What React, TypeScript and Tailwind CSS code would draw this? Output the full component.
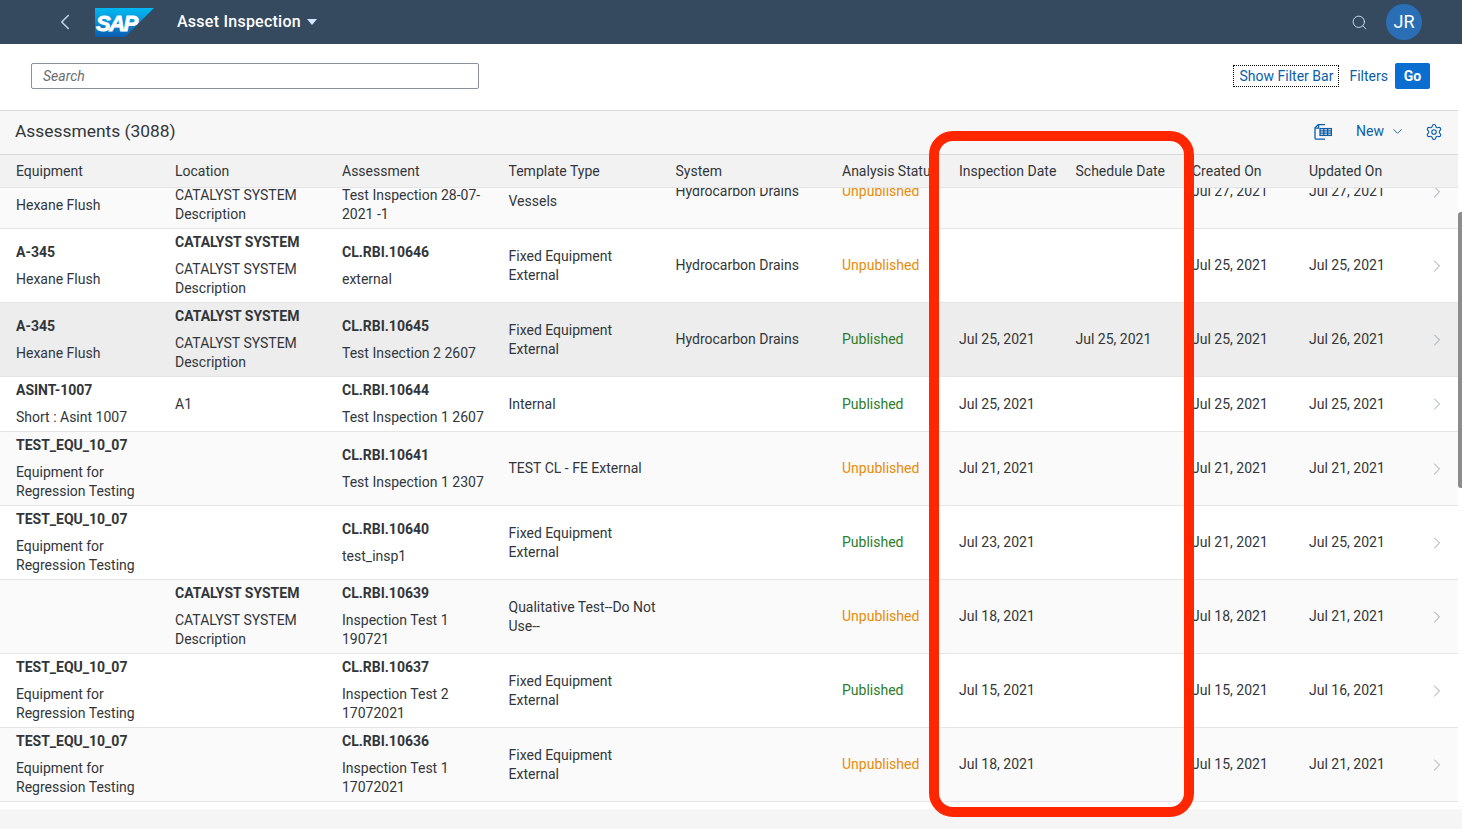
import { ChevronRight, ChevronDown, ChevronLeft, Search, Settings } from 'lucide-react';

type Row = {
  eq?: string;
  eqDesc?: string;
  locBold?: string;
  loc?: string;
  id?: string;
  name?: string;
  template?: string;
  system?: string;
  status: 'Published' | 'Unpublished';
  inspection?: string;
  schedule?: string;
  created: string;
  updated: string;
  bg: string;
};

const CAT = 'CATALYST SYSTEM';
const CAT_DESC = 'CATALYST SYSTEM Description';
const FE = 'Fixed Equipment External';
const REG = 'Equipment for Regression Testing';

const rows: Row[] = [
  { eq: 'A-345', eqDesc: 'Hexane Flush', locBold: CAT, loc: CAT_DESC, id: 'CL.RBI.10647', name: 'Test Inspection 28-07-2021 -1', template: 'Unfired Heated Tank Vessels', system: 'Hydrocarbon Drains', status: 'Unpublished', created: 'Jul 27, 2021', updated: 'Jul 27, 2021', bg: 'bg-[#fafafa]' },
  { eq: 'A-345', eqDesc: 'Hexane Flush', locBold: CAT, loc: CAT_DESC, id: 'CL.RBI.10646', name: 'external', template: FE, system: 'Hydrocarbon Drains', status: 'Unpublished', created: 'Jul 25, 2021', updated: 'Jul 25, 2021', bg: 'bg-white' },
  { eq: 'A-345', eqDesc: 'Hexane Flush', locBold: CAT, loc: CAT_DESC, id: 'CL.RBI.10645', name: 'Test Insection 2 2607', template: FE, system: 'Hydrocarbon Drains', status: 'Published', inspection: 'Jul 25, 2021', schedule: 'Jul 25, 2021', created: 'Jul 25, 2021', updated: 'Jul 26, 2021', bg: 'bg-[#ededed]' },
  { eq: 'ASINT-1007', eqDesc: 'Short : Asint 1007', loc: 'A1', id: 'CL.RBI.10644', name: 'Test Inspection 1 2607', template: 'Internal', status: 'Published', inspection: 'Jul 25, 2021', created: 'Jul 25, 2021', updated: 'Jul 25, 2021', bg: 'bg-white' },
  { eq: 'TEST_EQU_10_07', eqDesc: REG, id: 'CL.RBI.10641', name: 'Test Inspection 1 2307', template: 'TEST CL - FE External', status: 'Unpublished', inspection: 'Jul 21, 2021', created: 'Jul 21, 2021', updated: 'Jul 21, 2021', bg: 'bg-[#fafafa]' },
  { eq: 'TEST_EQU_10_07', eqDesc: REG, id: 'CL.RBI.10640', name: 'test_insp1', template: FE, status: 'Published', inspection: 'Jul 23, 2021', created: 'Jul 21, 2021', updated: 'Jul 25, 2021', bg: 'bg-white' },
  { locBold: CAT, loc: CAT_DESC, id: 'CL.RBI.10639', name: 'Inspection Test 1 190721', template: 'Qualitative Test--Do Not Use--', status: 'Unpublished', inspection: 'Jul 18, 2021', created: 'Jul 18, 2021', updated: 'Jul 21, 2021', bg: 'bg-[#fafafa]' },
  { eq: 'TEST_EQU_10_07', eqDesc: REG, id: 'CL.RBI.10637', name: 'Inspection Test 2 17072021', template: FE, status: 'Published', inspection: 'Jul 15, 2021', created: 'Jul 15, 2021', updated: 'Jul 16, 2021', bg: 'bg-white' },
  { eq: 'TEST_EQU_10_07', eqDesc: REG, id: 'CL.RBI.10636', name: 'Inspection Test 1 17072021', template: FE, status: 'Unpublished', inspection: 'Jul 18, 2021', created: 'Jul 15, 2021', updated: 'Jul 21, 2021', bg: 'bg-[#fafafa]' },
];

const grid = 'grid grid-cols-[167px_167px_166.5px_167px_166.5px_117px_116.5px_116.5px_117px_116.5px_1fr]';

function Stacked({ bold, text }: { bold?: string; text?: string }) {
  return (
    <div className="flex flex-col gap-2">
      {bold && <div className="font-bold">{bold}</div>}
      {text && <div>{text}</div>}
    </div>
  );
}

function TableRow({ row, first }: { row: Row; first?: boolean }) {
  return (
    <div className={`${grid} items-center border-b border-[#e5e5e5] py-1 leading-[19px] ${row.bg} ${first ? '-mt-[33px]' : ''}`}>
      <div className="pl-4 pr-2">
        <Stacked bold={row.eq} text={row.eqDesc} />
      </div>
      <div className="pl-2 pr-2">
        <Stacked bold={row.locBold} text={row.loc} />
      </div>
      <div className="pl-2 pr-2">
        <Stacked bold={row.id} text={row.name} />
      </div>
      <div className="pl-2 pr-2">{row.template}</div>
      <div className="pl-2 pr-2">{row.system}</div>
      <div className={`pl-2 pr-2 ${row.status === 'Published' ? 'text-[#2b7d2b]' : 'text-[#e78c07]'}`}>{row.status}</div>
      <div className="pl-2">{row.inspection}</div>
      <div className="pl-2">{row.schedule}</div>
      <div className="pl-2">{row.created}</div>
      <div className="pl-2">{row.updated}</div>
      <div className="flex justify-end pr-[11px]">
        <ChevronRight size={20} strokeWidth={1} className="text-[#89919a]" />
      </div>
    </div>
  );
}

function SapLogo() {
  return (
    <svg width="60" height="29" viewBox="0 0 60 29">
      <defs>
        <linearGradient id="sapBlue" x1="0" y1="0" x2="0" y2="1">
          <stop offset="0" stopColor="#00b8f1" />
          <stop offset="0.5" stopColor="#0a8fd8" />
          <stop offset="1" stopColor="#0a5cb0" />
        </linearGradient>
      </defs>
      <polygon points="0,0 59,0 30,29 0,29" fill="url(#sapBlue)" />
      <text x="1" y="23" fill="#fff" stroke="#fff" strokeWidth="0.8" fontFamily="'Liberation Sans', sans-serif" fontWeight="700" fontStyle="italic" fontSize="22" letterSpacing="-1.5">
        SAP
      </text>
    </svg>
  );
}

function ExportIcon() {
  return (
    <svg width="18" height="16" viewBox="0 0 18 16" fill="none" stroke="#0a5ea8" strokeWidth="1.3">
      <path d="M11 0.6H4.4L1 3.8V14a1.2 1.2 0 0 0 1.2 1.2H11" />
      <path d="M4.6 0.8V4.2H1.2" />
      <rect x="6" y="4.6" width="11.4" height="6.8" fill="#f7f7f7" />
      <path d="M6 6.8h11.4M6 9.1h11.4M9.8 4.6v6.8M13.6 4.6v6.8" />
    </svg>
  );
}

export default function App() {
  return (
    <div className="relative flex h-[829px] flex-col overflow-hidden bg-white font-['Roboto',sans-serif] text-[14px] text-[#32363a]">
      {/* Shell bar */}
      <div className="flex h-11 shrink-0 items-center bg-[#354a5f] pl-[52px] pr-10 text-white">
        <ChevronLeft size={26} strokeWidth={1.4} className="text-[#c3d5e8]" />
        <div className="ml-[17px]">
          <SapLogo />
        </div>
        <div className="ml-[22px] text-base font-medium tracking-[0.25px]">Asset Inspection</div>
        <div className="ml-1.5 h-0 w-0 border-x-[5px] border-t-[6px] border-x-transparent border-t-[#d1e8ff]" />
        <div className="flex-1" />
        <Search size={17} strokeWidth={1.25} className="text-[#d1e8ff]" />
        <div className="ml-[18px] flex h-9 w-9 items-center justify-center rounded-full bg-[#2a6fb5] text-lg">JR</div>
      </div>

      <div className="flex w-[1458px] flex-1 flex-col bg-white">
        {/* Filter bar */}
        <div className="flex h-[67px] shrink-0 items-center border-b border-[#d9d9d9] pb-0.5 pl-[31px] pr-7">
          <div className="flex h-[26px] w-[448px] items-center rounded-[2px] border border-[#89919a] px-[11px] italic text-[#6a6d70]">
            Search
          </div>
          <div className="flex-1" />
          <div className="flex h-[22px] w-[106px] items-center justify-center border border-dotted border-black text-[#0a5ea8]">Show Filter Bar</div>
          <div className="ml-[10px] text-[#0a5ea8]">Filters</div>
          <div className="ml-[7px] flex h-[26px] w-[35px] items-center justify-center rounded-[2px] bg-[#0a6ed1] font-bold text-white">Go</div>
        </div>

        {/* Table toolbar */}
        <div className="flex h-11 shrink-0 items-center border-b border-[#d9d9d9] bg-[#f7f7f7] pb-0.5 pl-[15px] pr-[15px]">
          <div className="text-[17.4px]">Assessments (3088)</div>
          <div className="flex-1" />
          <ExportIcon />
          <div className="ml-6 text-[#0a5ea8]">New</div>
          <ChevronDown size={15} strokeWidth={1.4} className="ml-[6px] text-[#0a5ea8]" />
          <Settings size={18} strokeWidth={1.5} className="ml-[20px] text-[#0a5ea8]" />
        </div>

        {/* Column headers */}
        <div className={`${grid} relative z-10 h-[33px] shrink-0 items-center border-b border-[#e5e5e5] bg-[#f2f2f2]`}>
          <div className="pl-4">Equipment</div>
          <div className="pl-2">Location</div>
          <div className="pl-2">Assessment</div>
          <div className="pl-2">Template Type</div>
          <div className="pl-2">System</div>
          <div className="overflow-hidden whitespace-nowrap pl-2">Analysis Status</div>
          <div className="pl-2">Inspection Date</div>
          <div className="pl-2">Schedule Date</div>
          <div className="pl-2">Created On</div>
          <div className="pl-2">Updated On</div>
          <div />
        </div>

        <div className="h-[621px] overflow-hidden">
          {rows.map((row, i) => (
            <TableRow key={row.id} row={row} first={i === 0} />
          ))}
        </div>
      </div>

      {/* Page footer strip */}
      <div className="h-5 shrink-0 bg-[#f5f5f5]" />

      {/* Scrollbar thumb */}
      <div className="absolute left-[1458px] top-[212px] h-[276px] w-1 rounded-l-[3px] bg-[#8c8c8c]" />

      {/* Red annotation */}
      <div className="pointer-events-none absolute left-[929px] top-[131px] z-20 h-[686px] w-[265px] rounded-[24px] border-[10px] border-[#ff2600]" />
    </div>
  );
}
